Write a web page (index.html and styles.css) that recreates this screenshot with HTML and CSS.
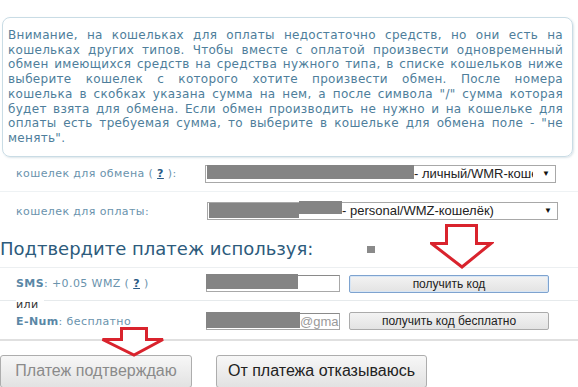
FILE: index.html
```html
<!DOCTYPE html>
<html lang="ru">
<head>
<meta charset="utf-8">
<title>Подтверждение платежа</title>
<link rel="stylesheet" href="styles.css">
</head>
<body>
<div class="page">
  <div class="notice">
    <span class="ln">Внимание, на кошельках для оплаты недостаточно средств, но они есть на</span>
    <span class="ln">кошельках других типов. Чтобы вместе с оплатой произвести одновременный</span>
    <span class="ln">обмен имеющихся средств на средства нужного типа, в списке кошельков ниже</span>
    <span class="ln">выберите кошелек с которого хотите произвести обмен. После номера</span>
    <span class="ln">кошелька в скобках указана сумма на нем, а после символа "/" сумма которая</span>
    <span class="ln">будет взята для обмена. Если обмен производить не нужно и на кошельке для</span>
    <span class="ln">оплаты есть требуемая сумма, то выберите в кошельке для обмена поле - "не</span>
    <span class="ln last">менять".</span>
  </div>

  <div class="row row-exchange">
    <div class="label">кошелек для обмена ( <a class="help">?</a> ):</div>
    <div class="select select-exchange">
      <span class="redact redact-a"></span><span class="opt">- личный/WMR-кошелёк)</span>
      <span class="caret">▼</span>
    </div>
  </div>
  <div class="row row-pay">
    <div class="label">кошелек для оплаты:</div>
    <div class="select select-pay">
      <span class="redact redact-b"></span><span class="redact redact-c"></span><span class="opt">- personal/WMZ-кошелёк)</span>
      <span class="caret">▼</span>
    </div>
  </div>

  <h2 class="confirm">Подтвердите платеж используя:<span class="dot"></span></h2>

  <div class="methods">
    <div class="method method-sms">
      <div class="label"><b>SMS</b>: +0.05 WMZ ( <a class="help">?</a> )</div>
      <div class="input"><span class="redact redact-d"></span></div>
      <button class="small-btn focused" type="button">получить код</button>
    </div>
    <div class="or"><span>или</span></div>
    <div class="method method-enum">
      <div class="label"><b>E-Num</b>: бесплатно</div>
      <div class="input"><span class="redact redact-e"></span><span class="mail">@gma</span></div>
      <button class="small-btn" type="button">получить код бесплатно</button>
    </div>
  </div>

  <div class="actions">
    <button class="big-btn disabled" type="button">Платеж подтверждаю</button>
    <button class="big-btn cancel" type="button">От платежа отказываюсь</button>
  </div>

  <svg class="arrow arrow-top" width="64" height="46" viewBox="0 0 64 46">
    <polygon points="16.5,1.5 46.5,1.5 46.5,19.5 61,19.5 32,43 1.5,19.5 16.5,19.5" />
  </svg>
  <svg class="arrow arrow-bottom" width="66" height="31" viewBox="0 0 66 31">
    <polygon points="20.5,1.5 45.5,1.5 45.5,12.5 62,12.5 33,28 1.5,12.5 20.5,12.5" />
  </svg>
</div>
</body>
</html>
```

FILE: styles.css
```css
* { box-sizing: border-box; }

html, body {
  margin: 0;
  padding: 0;
  background: #ffffff;
}

.page {
  position: relative;
  width: 578px;
  height: 387px;
  overflow: hidden;
  font-family: "DejaVu Sans", Verdana, sans-serif;
}

.notice {
  margin: 17px 5px 0 2px;
  padding: 10px 9px 10px 5px;
  border: 1px solid #c9dce5;
  border-radius: 8px;
  box-shadow: 1px 1px 2px rgba(120, 150, 170, 0.25);
  color: #4e7e9b;
  font-size: 12px;
  line-height: 14.7px;
  letter-spacing: 0.3px;
}

.ln {
  display: block;
  text-align: justify;
  text-align-last: justify;
}

.ln.last {
  text-align-last: left;
}

.row {
  display: grid;
  grid-template-columns: 205px 1fr;
  align-items: center;
}

.row-exchange {
  height: 35px;
  border-bottom: 1px solid #eef2f4;
}

.row-pay {
  height: 39px;
}

.label {
  padding-left: 16px;
  font-size: 11px;
  letter-spacing: 0.4px;
  color: #6a93ad;
  white-space: nowrap;
}

.label b {
  color: #5a87a6;
  font-weight: bold;
}

.help {
  color: #2a5b86;
  font-weight: bold;
  text-decoration: underline;
}

.select {
  position: relative;
  display: flex;
  align-items: flex-start;
  width: 351px;
  height: 18px;
  padding-right: 22px;
  border: 1px solid #a8a8a8;
  background: #fff;
  font-family: "Liberation Sans", Arial, sans-serif;
  font-size: 13px;
  color: #222;
  white-space: nowrap;
  overflow: visible;
}

.select-pay {
  margin-left: 2px;
}

.opt {
  line-height: 16px;
  overflow: hidden;
  flex: 0 1 auto;
  min-width: 0;
}

.caret {
  position: absolute;
  right: 5px;
  top: 1px;
  font-size: 8px;
  line-height: 14px;
  color: #111;
}

.redact {
  display: inline-block;
  flex: none;
  background: #848484;
}

.redact-a {
  width: 207px;
  height: 14px;
  margin: -1px 0 0 1px;
}

.redact-b {
  width: 90px;
  height: 15px;
  margin: 0 0 0 1px;
}

.redact-c {
  width: 43px;
  height: 13px;
  margin: -2px 0 0 0;
}

.confirm {
  margin: 0;
  height: 36px;
  line-height: 36px;
  font-size: 18px;
  font-weight: normal;
  color: #2d5b7c;
  white-space: nowrap;
}

.dot {
  display: inline-block;
  width: 8px;
  height: 7px;
  margin-left: 54px;
  vertical-align: 2px;
  background: #8a8a8a;
}

.methods {
  border-top: 1px solid #eceff1;
  border-bottom: 2px solid #e0e0e0;
}

.method {
  display: grid;
  grid-template-columns: 206px 134px 209px;
  align-items: center;
}

.method-sms {
  height: 32px;
}

.method-enum {
  height: 35px;
}

.input {
  display: flex;
  align-items: flex-start;
  height: 17px;
  border: 1px solid #a8a8a8;
  border-top-color: #8a8a8a;
  background: #fff;
}

.redact-d {
  width: 92px;
  height: 15px;
  margin: -2px 0 0 -1px;
}

.redact-e {
  width: 94px;
  height: 16px;
  margin: -2px 0 0 -1px;
}

.mail {
  font-family: "Liberation Sans", Arial, sans-serif;
  font-size: 13px;
  line-height: 15px;
  color: #9a9a9a;
  overflow: hidden;
  white-space: nowrap;
}

.small-btn {
  height: 18px;
  margin-left: 9px;
  padding: 0;
  border: 1px solid #ababab;
  border-radius: 2px;
  background: linear-gradient(#f3f3f3, #e3e3e3);
  font-family: "Liberation Sans", Arial, sans-serif;
  font-size: 12px;
  color: #222;
}

.small-btn.focused {
  border-color: #7ea3cf;
  box-shadow: inset 0 0 0 1px #d8e6f5;
}

.or {
  display: flex;
  align-items: flex-start;
  height: 4px;
}

.or::before {
  content: "";
  width: 16px;
  border-top: 1px solid #e6eaec;
}

.or::after {
  content: "";
  flex: 1;
  border-top: 1px solid #e6eaec;
}

.or span {
  margin-top: -2px;
  padding: 0 5px 0 0;
  font-size: 11px;
  line-height: 13px;
  letter-spacing: 0.4px;
  color: #333;
}

.actions {
  display: flex;
  gap: 24px;
  margin-top: 14px;
}

.big-btn {
  height: 33px;
  padding: 0;
  border: 1px solid #adadad;
  border-radius: 3px;
  background: linear-gradient(#f7f7f7, #e2e2e2);
  font-family: "Liberation Sans", Arial, sans-serif;
  font-size: 16px;
  color: #222;
  white-space: nowrap;
}

.big-btn.disabled {
  width: 192px;
  color: #8a8a8a;
}

.big-btn.cancel {
  width: 211px;
}

.arrow {
  position: absolute;
}

.arrow polygon {
  fill: #ffffff;
  stroke: #d9232d;
  stroke-width: 3;
  stroke-linejoin: miter;
}

.arrow-top {
  left: 430px;
  top: 224px;
}

.arrow-bottom {
  left: 101px;
  top: 327px;
}
```
